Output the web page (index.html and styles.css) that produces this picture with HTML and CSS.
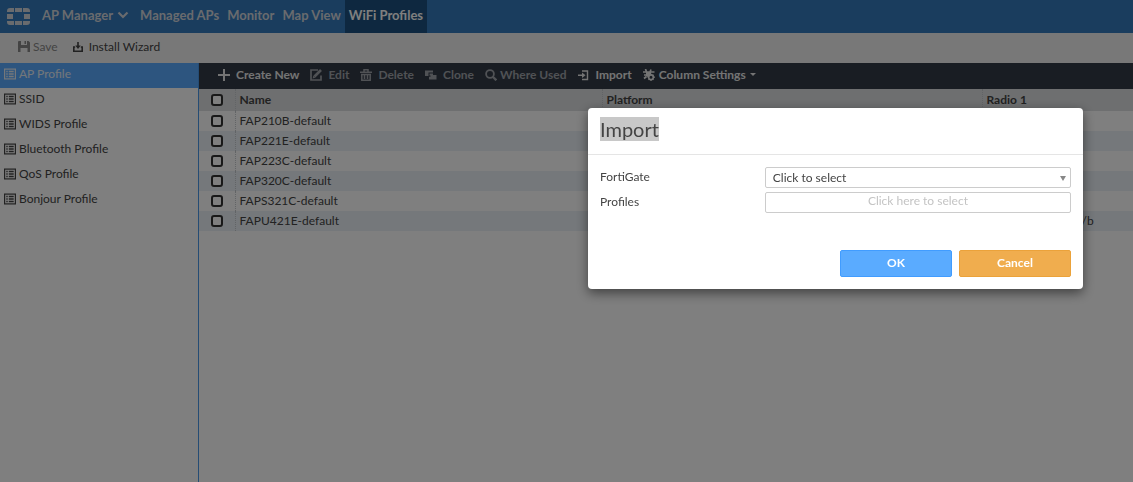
FILE: index.html
```html
<!DOCTYPE html>
<html lang="en">
<head>
    <meta charset="UTF-8">
    <meta name="viewport" content="width=device-width, initial-scale=1.0">
    <title>WiFi Profiles</title>
    <link rel="stylesheet" href="styles.css">
</head>
<body>
    <!-- shared icons -->
    <svg class="sprite" aria-hidden="true">
        <symbol id="icon-list" viewBox="0 0 12 11">
            <rect x=".6" y=".6" width="10.8" height="9.8" fill="none" stroke="currentColor" stroke-width="1.2"/>
            <path d="M2.3 3h1.4M2.3 5.5h1.4M2.3 8h1.4M4.8 3h4.9M4.8 5.5h4.9M4.8 8h4.9" stroke="currentColor" stroke-width="1.3"/>
        </symbol>
    </svg>

    <header class="navbar">
        <svg class="logo" viewBox="0 0 23 17" fill="currentColor" aria-hidden="true">
            <path d="M3 0h4v4H0V3a3 3 0 0 1 3-3zM8 0h7v4H8zM16 0h4a3 3 0 0 1 3 3v1h-7zM0 6h6v5H0zM17 6h6v5h-6zM0 13h7v4H3a3 3 0 0 1-3-3zM8 13h7v4H8zM16 13h7v1a3 3 0 0 1-3 3h-4z"/>
        </svg>
        <nav class="nav-links">
            <a class="nav-link manager" href="#">AP Manager
                <svg class="chevron" viewBox="0 0 12 8" aria-hidden="true"><path d="M1.500 1.500L6 6l4.500-4.500" fill="none" stroke="currentColor" stroke-width="2.200"/></svg>
            </a>
            <a class="nav-link" href="#">Managed APs</a>
            <a class="nav-link" href="#">Monitor</a>
            <a class="nav-link" href="#">Map View</a>
            <a class="nav-link active" href="#">WiFi Profiles</a>
        </nav>
    </header>

    <div class="actions">
        <button class="action" type="button" disabled>
            <svg class="icon" viewBox="0 0 12 12" fill="currentColor" aria-hidden="true"><path fill-rule="evenodd" d="M1 0h2v4h6V0h1.500L12 1.500V11H9.500V7h-7v4H0V1a1 1 0 0 1 1-1z"/><path d="M6.500 0H8v3H6.500z"/></svg>
            Save
        </button>
        <button class="action install" type="button">
            <svg class="icon" viewBox="0 0 12 12" fill="none" stroke="currentColor" stroke-width="1.600" aria-hidden="true"><path d="M3.200 6H1.800v4.200h8.400V6H8.800M6 1v4"/><path d="M3.300 4.500h5.400L6 8z" fill="currentColor" stroke="none"/></svg>
            Install Wizard
        </button>
    </div>

    <div class="content">
        <aside class="sidebar">
            <a class="side-link active" href="#"><svg class="icon"><use href="#icon-list"/></svg>AP Profile</a>
            <a class="side-link" href="#"><svg class="icon"><use href="#icon-list"/></svg>SSID</a>
            <a class="side-link" href="#"><svg class="icon"><use href="#icon-list"/></svg>WIDS Profile</a>
            <a class="side-link" href="#"><svg class="icon"><use href="#icon-list"/></svg>Bluetooth Profile</a>
            <a class="side-link" href="#"><svg class="icon"><use href="#icon-list"/></svg>QoS Profile</a>
            <a class="side-link" href="#"><svg class="icon"><use href="#icon-list"/></svg>Bonjour Profile</a>
        </aside>

        <main class="main">
            <div class="toolbar">
                <button class="tool" type="button">
                    <svg class="icon" viewBox="0 0 12 12" aria-hidden="true"><path d="M6 0v12M0 6h12" stroke="currentColor" stroke-width="2"/></svg>
                    Create New
                </button>
                <button class="tool" type="button" disabled>
                    <svg class="icon" viewBox="0 0 12 12" fill="none" stroke="currentColor" aria-hidden="true"><path d="M8 1H1v10h10V6.500" stroke-width="1.700"/><path d="M4.500 7.500L11 1" stroke-width="2.600"/><path d="M2.600 9.400l.8-3 2.200 2.200z" fill="currentColor" stroke="none"/></svg>
                    Edit
                </button>
                <button class="tool" type="button" disabled>
                    <svg class="icon" viewBox="0 0 12 12" fill="none" stroke="currentColor" stroke-width="1.500" aria-hidden="true"><path d="M0 3.200h12M4 3V.8h4V3M1.800 5v6.200h8.400V5M1 5.500h10M4.500 6v4M7.500 6v4"/></svg>
                    Delete
                </button>
                <button class="tool" type="button" disabled>
                    <svg class="icon" viewBox="0 0 12 12" fill="currentColor" aria-hidden="true"><path d="M0 1.500h8v2H3.500V7H0z"/><path d="M4.500 4.500H8V6h3.500v4.500H4V7.800h1.500V6.500h-1z"/></svg>
                    Clone
                </button>
                <button class="tool search" type="button" disabled>
                    <svg class="icon" viewBox="0 0 12 12" fill="none" stroke="currentColor" stroke-width="1.800" aria-hidden="true"><circle cx="5" cy="5" r="3.900"/><path d="M7.800 7.800l3.500 3.500" stroke-width="2.300"/></svg>
                    Where Used
                </button>
                <button class="tool" type="button">
                    <svg class="icon" viewBox="0 0 12 12" fill="none" stroke="currentColor" stroke-width="1.400" aria-hidden="true"><path d="M4 2h5.500v8.500H4M0 6.200h6"/><path d="M4 3.500l3.500 2.700L4 9z" fill="currentColor" stroke="none"/></svg>
                    Import
                </button>
                <button class="tool columns" type="button">
                    <svg class="icon" viewBox="0 0 12 12" fill="none" stroke="currentColor" aria-hidden="true"><path d="M0 3h11.500M2.500 0l1 3M8 .5L7 3M1 6h3M1 9.500l2.500-2" stroke-width="1.700"/><path d="M3 3h5v2L4.500 8 3 7z" fill="currentColor" stroke="none"/><circle cx="8" cy="8.200" r="2.300" stroke-width="1.600"/><path d="M8 4.800v1.200M8 10.600V12M4.500 8.200H6M10.300 8.200H12M5.500 10.700l1-1M10.500 5.700l-1 1M10.500 10.700l-1-1" stroke-width="1.300"/></svg>
                    Column Settings
                    <svg class="caret" viewBox="0 0 6 3" aria-hidden="true"><path d="M0 0h6L3 3z" fill="currentColor"/></svg>
                </button>
            </div>

            <table class="profiles">
                <thead>
                    <tr>
                        <th class="check"><input type="checkbox" aria-label="Select all"></th>
                        <th class="name">Name</th>
                        <th class="platform">Platform</th>
                        <th>Radio 1</th>
                    </tr>
                </thead>
                <tbody>
                    <tr><td class="check"><input type="checkbox" aria-label="FAP210B-default"></td><td>FAP210B-default</td><td></td><td></td></tr>
                    <tr><td class="check"><input type="checkbox" aria-label="FAP221E-default"></td><td>FAP221E-default</td><td></td><td></td></tr>
                    <tr><td class="check"><input type="checkbox" aria-label="FAP223C-default"></td><td>FAP223C-default</td><td></td><td></td></tr>
                    <tr><td class="check"><input type="checkbox" aria-label="FAP320C-default"></td><td>FAP320C-default</td><td></td><td></td></tr>
                    <tr><td class="check"><input type="checkbox" aria-label="FAPS321C-default"></td><td>FAPS321C-default</td><td></td><td></td></tr>
                    <tr><td class="check"><input type="checkbox" aria-label="FAPU421E-default"></td><td>FAPU421E-default</td><td></td><td class="band">/b</td></tr>
                </tbody>
            </table>
        </main>
    </div>

    <!-- import dialog -->
    <div class="backdrop">
        <form class="modal" role="dialog" aria-labelledby="importTitle">
            <div class="modal-header">
                <h1 id="importTitle"><mark>Import</mark></h1>
            </div>
            <div class="modal-body">
                <div class="field">
                    <label for="fortigate">FortiGate</label>
                    <div class="select-wrap">
                        <select id="fortigate" name="fortigate">
                            <option>Click to select</option>
                        </select>
                        <svg class="select-arrow" viewBox="0 0 6 5" aria-hidden="true"><path d="M0 0h6L3 5z" fill="currentColor"/></svg>
                    </div>
                </div>
                <div class="field">
                    <label for="profiles">Profiles</label>
                    <input type="text" id="profiles" name="profiles" placeholder="Click here to select">
                </div>
            </div>
            <div class="modal-footer">
                <button class="btn ok" type="submit">OK</button>
                <button class="btn cancel" type="button">Cancel</button>
            </div>
        </form>
    </div>
</body>
</html>
```

FILE: styles.css
```css
* {
    box-sizing: border-box;
}
body {
    display: flex;
    flex-direction: column;
    min-height: 100vh;
    margin: 0;
    font-family: Lato, "Liberation Sans", sans-serif;
    font-size: 12px;
    line-height: 18px;
    color: #444;
    background: #fff;
}
a {
    color: inherit;
    text-decoration: none;
}
button, input, select {
    font: inherit;
    color: inherit;
}
.sprite {
    display: none;
}
.icon {
    flex: none;
    width: 12px;
    height: 12px;
}

/* top navigation */
.navbar {
    display: flex;
    align-items: center;
    height: 33px;
    padding-left: 7px;
    background: #347abc;
    color: #d2d6dc;
}
.logo {
    width: 23px;
    height: 17px;
}
.nav-links {
    display: flex;
    align-self: stretch;
    margin-left: 8px;
    font-size: 13px;
    font-weight: bold;
}
.nav-link {
    display: flex;
    align-items: center;
    gap: 4px;
    padding: 0 4px 4px;
}
.nav-link.manager {
    margin-right: 3px;
}
.nav-link.active {
    background: #1c5180;
    color: #fff;
}
.chevron {
    width: 12px;
    height: 8px;
}

/* save / install */
.actions {
    display: flex;
    align-items: center;
    gap: 14px;
    height: 30px;
    padding-left: 18px;
    background: #f0f0f0;
}
.action {
    display: flex;
    align-items: center;
    gap: 3px;
    padding: 0 0 2px;
    border: 0;
    background: none;
}
.action:disabled {
    color: #888;
}
.action.install {
    gap: 5px;
}

.content {
    display: flex;
    flex: 1;
}
.sidebar {
    width: 199px;
    border-right: 1px solid #4a98e8;
}
.side-link {
    display: flex;
    align-items: center;
    gap: 3px;
    height: 25px;
    padding: 0 4px 3px;
}
.side-link.active {
    background: #5aabff;
    color: #e8eef5;
}
.main {
    flex: 1;
}

/* table toolbar */
.toolbar {
    display: flex;
    align-items: center;
    gap: 11px;
    height: 26px;
    padding: 0 19px 3px;
    background: #333b47;
    color: #e8e8e8;
}
.tool {
    display: flex;
    align-items: center;
    gap: 6px;
    padding: 0;
    border: 0;
    background: none;
    font-weight: bold;
}
.tool:disabled {
    color: #a0a4aa;
}
.tool.search {
    gap: 3px;
}
.tool.columns {
    gap: 4px;
}
.caret {
    width: 6px;
    height: 3px;
}

.profiles {
    width: 100%;
    border-collapse: collapse;
    table-layout: fixed;
}
.profiles th {
    height: 22px;
    background: #dcdee0;
    font-weight: bold;
    text-align: left;
}
.profiles th, .profiles td {
    padding: 0 4px 1px;
    border-left: 1px dotted #c4c8cc;
}
.profiles td {
    height: 20px;
}
.profiles .check {
    width: 36px;
    border-left: 0;
    text-align: center;
}
.profiles .name {
    width: 367px;
}
.profiles .platform {
    width: 380px;
}
.profiles .band {
    padding-left: 99px;
}
.profiles tbody tr:nth-child(even) {
    background: #eaf0f6;
}
.profiles input {
    display: block;
    appearance: none;
    width: 12px;
    height: 12px;
    margin: 0 auto;
    border: 2px solid #333;
    border-radius: 3px;
    background: #fff;
}

/* dialog */
.backdrop {
    position: fixed;
    inset: 0;
    display: flex;
    align-items: flex-start;
    justify-content: flex-end;
    padding: 108px 50px 0;
    background: rgba(0, 0, 0, 0.5);
}
.modal {
    width: 495px;
    max-width: 100%;
    border-radius: 4px;
    background: #fff;
    box-shadow: 0 4px 12px rgba(0, 0, 0, 0.5);
}
.modal-header {
    padding: 7px 12px 10px;
    border-bottom: 1px solid #e5e5e5;
}
.modal-header h1 {
    margin: 0;
    font-size: 20px;
    font-weight: normal;
    line-height: 29px;
}
.modal-header mark {
    background: #c8c8c8;
    color: #444;
}
.modal-body {
    display: grid;
    gap: 4px;
    padding: 12px 12px 0;
}
.field {
    display: grid;
    grid-template-columns: 35% 1fr;
}
.field label {
    padding-top: 1px;
}
.select-wrap {
    position: relative;
}
.field select, .field input {
    display: block;
    appearance: none;
    width: 100%;
    height: 21px;
    padding: 0 7px;
    border: 1px solid #ccc;
    border-radius: 2px;
    background: #fff;
}
.field input {
    padding-bottom: 4px;
    text-align: center;
}
.field input::placeholder {
    color: #c4c4c4;
}
.select-arrow {
    position: absolute;
    top: 9px;
    right: 5px;
    width: 6px;
    height: 5px;
    color: #888;
}
.modal-footer {
    display: flex;
    justify-content: flex-end;
    gap: 7px;
    padding: 37px 12px 12px;
}
.btn {
    width: 112px;
    height: 27px;
    padding: 0 0 2px;
    border: 1px solid;
    border-radius: 2px;
    color: #fff;
    font-weight: bold;
}
.btn.ok {
    border-color: #419cff;
    background: #5aabff;
}
.btn.cancel {
    border-color: #eba23a;
    background: #f0ad4e;
}
```
